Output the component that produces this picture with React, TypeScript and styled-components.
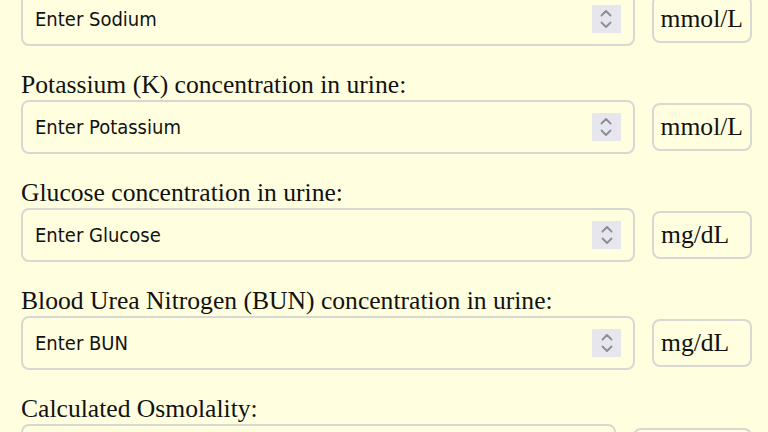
import React from "react";
import styled, { createGlobalStyle } from "styled-components";

const Global = createGlobalStyle`
  html, body { margin: 0; padding: 0; background: #ffffe0; }
  body { overflow: hidden; }
`;

const Page = styled.div`
  box-sizing: border-box;
  width: 768px;
  height: 432px;
  overflow: hidden;
  background: #ffffe0;
  padding: 0 16px 0 21px;
`;

const Stack = styled.div`
  display: flex;
  flex-direction: column;
  gap: 24px;
  margin-top: -8px;
`;

const Group = styled.div`
  display: flex;
  flex-direction: column;
`;

const Label = styled.label`
  font-family: "Liberation Serif", "Times New Roman", serif;
  font-size: 25.6px;
  line-height: 30px;
  color: #111;
  white-space: nowrap;
`;

const Row = styled.div`
  display: flex;
  align-items: center;
  gap: 17px;
`;

const Field = styled.div`
  box-sizing: border-box;
  flex: 1;
  height: 54px;
  display: flex;
  align-items: center;
  border: 2px solid #d8d8d2;
  border-radius: 8px;
  padding: 0 12px;
`;

const Input = styled.input`
  flex: 1;
  min-width: 0;
  border: none;
  outline: none;
  background: transparent;
  padding: 0;
  font-family: "DejaVu Sans Condensed", "DejaVu Sans", Tahoma, sans-serif;
  font-size: 20px;
  color: #111;
  &::placeholder { color: #111; opacity: 1; }
`;

const Spinner = styled.div`
  width: 29px;
  height: 28px;
  background: #e6e6ec;
  display: flex;
  align-items: center;
  justify-content: center;
`;

const Unit = styled.div<{ $wide?: boolean }>`
  box-sizing: border-box;
  min-width: ${(p) => (p.$wide ? "119px" : "100px")};
  height: ${(p) => (p.$wide ? "46px" : "48px")};
  border: 2px solid #d8d8d2;
  border-radius: 8px;
  padding: 0 7px;
  display: flex;
  align-items: center;
  font-family: "Liberation Serif", "Times New Roman", serif;
  font-size: 25.6px;
  color: #111;
  white-space: nowrap;
`;

const SpinIcon = () => (
  <svg width="14" height="22" viewBox="0 0 14 22" fill="none">
    <path d="M2.5 7.5 L7 3 L11.5 7.5" stroke="#8c8c9a" strokeWidth="1.8" strokeLinecap="round" strokeLinejoin="round" />
    <path d="M2.5 14.5 L7 19 L11.5 14.5" stroke="#8c8c9a" strokeWidth="1.8" strokeLinecap="round" strokeLinejoin="round" />
  </svg>
);

type Item = { label?: string; placeholder: string; unit: string; spin: boolean };

const items: Item[] = [
  { placeholder: "Enter Sodium", unit: "mmol/L", spin: true },
  { label: "Potassium (K) concentration in urine:", placeholder: "Enter Potassium", unit: "mmol/L", spin: true },
  { label: "Glucose concentration in urine:", placeholder: "Enter Glucose", unit: "mg/dL", spin: true },
  { label: "Blood Urea Nitrogen (BUN) concentration in urine:", placeholder: "Enter BUN", unit: "mg/dL", spin: true },
  { label: "Calculated Osmolality:", placeholder: "", unit: "", spin: false },
];

export default function App() {
  return (
    <Page>
      <Global />
      <Stack>
        {items.map((it, i) => (
          <Group key={i}>
            {it.label && <Label>{it.label}</Label>}
            <Row>
              <Field>
                <Input type="text" placeholder={it.placeholder} readOnly={!it.spin} />
                {it.spin && (
                  <Spinner>
                    <SpinIcon />
                  </Spinner>
                )}
              </Field>
              <Unit $wide={!it.spin}>{it.unit}</Unit>
            </Row>
          </Group>
        ))}
      </Stack>
    </Page>
  );
}
